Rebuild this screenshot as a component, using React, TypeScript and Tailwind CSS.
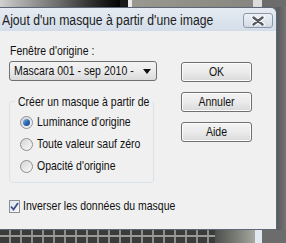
import type { ReactNode } from "react";

const font = "font-['Liberation_Sans',Arial,sans-serif]";

function Txt({ children, className = "" }: { children: ReactNode; className?: string }) {
  // le texte d'origine est un peu étiré verticalement
  return <span className={`inline-block scale-y-120 whitespace-nowrap ${className}`}>{children}</span>;
}

function Radio({ checked, label }: { checked?: boolean; label: string }) {
  return (
    <div className="flex h-[22px] items-center">
      <div className="ml-[10px] flex h-[13px] w-[13px] items-center justify-center rounded-full border border-[#8d8f92] bg-gradient-to-br from-[#d6d6d6] to-[#f8f8f8]">
        {checked && (
          <div className="h-[7px] w-[7px] rounded-full bg-gradient-to-br from-[#8fb7e6] via-[#2d6bb8] to-[#184a8c]" />
        )}
      </div>
      <Txt className="ml-[4px] text-[10.5px] text-[#111]">{label}</Txt>
    </div>
  );
}

function Button({ label }: { label: string }) {
  return (
    <div className="flex h-[20px] w-[71px] items-center justify-center rounded-[3px] border border-[#707070] bg-gradient-to-b from-[#f3f3f3] via-[#ebebeb] to-[#d9d9d9] shadow-[inset_0_0_0_1px_#fcfcfc]">
      <Txt className="text-[10.5px] text-[#111]">{label}</Txt>
    </div>
  );
}

export default function App() {
  return (
    <div className={`flex h-[243px] w-[286px] flex-col overflow-hidden bg-[#6b6b6b] ${font}`}>
      {/* fond du bureau en haut */}
      <div className="flex h-[7px] shrink-0">
        <div className="w-[120px] bg-gradient-to-r from-[#d0d0d0] via-[#6a6a6a] to-[#050505]" />
        <div className="w-[8px] bg-[#1a1a1a]" />
        <div className="w-[4px] bg-[#ececec]" />
        <div className="w-[121px] bg-gradient-to-r from-[#9a9990] to-[#878680]" />
        <div className="w-[9px] bg-[#dcdcdc]" />
        <div className="flex-1 bg-[#6c6c6c]" />
      </div>

      <div className="flex h-[223px] shrink-0">
        {/* fenêtre */}
        <div className="flex w-[277px] flex-col overflow-hidden rounded-tr-[6px] border-t border-r border-b border-[#5d6877] shadow-[1px_1px_2px_rgba(0,0,0,0.4)]">
          <div className="flex h-[23px] shrink-0 items-start justify-between bg-gradient-to-b from-[#e6ecf3] to-[#d3dde9]">
            <Txt className="ml-[2px] mt-[5px] text-[12.2px] leading-[14px] text-[#1c1c1c]">
              Ajout d'un masque à partir d'une image
            </Txt>
            <div className="mr-[3px] mt-[5px] flex h-[15px] w-[30px] items-center justify-center rounded-[3px] border border-[#8c98a8] bg-gradient-to-b from-[#eef2f7] to-[#d2dae4]">
              <svg width="14" height="10" viewBox="0 0 14 10">
                <path d="M2.5 1.5 L11.5 8.5 M11.5 1.5 L2.5 8.5" stroke="#ffffff" strokeWidth="4.5" strokeLinecap="round" />
                <path d="M2.5 1.5 L11.5 8.5 M11.5 1.5 L2.5 8.5" stroke="#555a62" strokeWidth="2.4" strokeLinecap="round" />
              </svg>
            </div>
          </div>

          <div className="flex flex-1 bg-[#f0f0f0]">
            <div className="flex w-[157px] flex-col pl-[9px]">
              <div className="mt-[11px] h-[14px] leading-[14px]">
                <Txt className="ml-[1px] text-[10.5px] text-[#111]">Fenêtre d'origine :</Txt>
              </div>

              <div className="mt-[5px] flex h-[20px] w-[148px] items-center justify-between rounded-[3px] border border-[#707070] bg-gradient-to-b from-[#f3f3f3] via-[#ebebeb] to-[#dadada]">
                <Txt className="ml-[4px] text-[10.5px] text-[#111]">Mascara 001 - sep 2010 -</Txt>
                <svg width="8" height="5" viewBox="0 0 8 5" className="mr-[5px]">
                  <path d="M0 0 H8 L4 5 Z" fill="#111" />
                </svg>
              </div>

              <fieldset className="mt-[13px] w-[145px] rounded-[3px] border border-[#dce3e8] pb-[5px] pt-[3px]">
                <legend className="ml-[5px] px-[3px] text-[10.5px] leading-[14px] text-[#111]">
                  <Txt>Créer un masque à partir de</Txt>
                </legend>
                <Radio checked label="Luminance d'origine" />
                <Radio label="Toute valeur sauf zéro" />
                <Radio label="Opacité d'origine" />
              </fieldset>

              <div className="mt-[16px] flex h-[14px] items-center">
                <div className="flex h-[13px] w-[13px] items-center justify-center border border-[#8d8f92] bg-gradient-to-br from-[#dfe4ec] to-[#f8f9fb]">
                  <svg width="9" height="9" viewBox="0 0 9 9">
                    <path d="M1 4.5 L3.5 7.5 L8 1" fill="none" stroke="#3c4f8c" strokeWidth="1.8" />
                  </svg>
                </div>
                <Txt className="ml-[3px] text-[10.5px] text-[#111]">Inverser les données du masque</Txt>
              </div>
            </div>

            <div className="ml-[24px] mt-[31px] flex flex-col gap-[10px]">
              <Button label="OK" />
              <Button label="Annuler" />
              <Button label="Aide" />
            </div>
          </div>
        </div>

        {/* fond à droite */}
        <div className="flex-1 bg-gradient-to-r from-[#5a5a5a] to-[#747474]" />
      </div>

      {/* fond du bureau en bas */}
      <div className="flex flex-1">
        <div className="w-[215px] bg-[linear-gradient(180deg,transparent_0_5px,#9a9b97_5px_7px,transparent_7px),repeating-linear-gradient(90deg,#3a3b3a_0_9px,#8e8f8c_9px_11px)]" />
        <div className="w-[40px] bg-gradient-to-r from-[#4d504c] to-[#a4a89f]" />
        <div className="w-[7px] bg-[#e2e8ef]" />
        <div className="flex-1 bg-[#6c6c6c]" />
      </div>
    </div>
  );
}
